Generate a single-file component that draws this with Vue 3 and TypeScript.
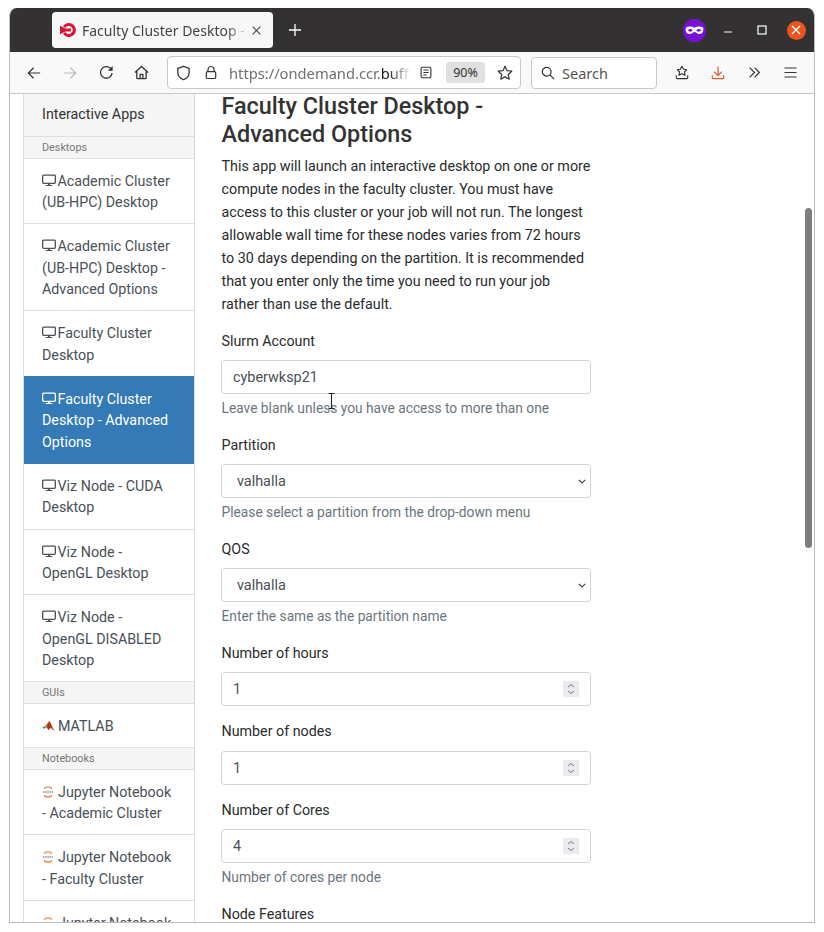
<script setup lang="ts">
interface NavItem { kind: 'head' | 'item' | 'top'; text: string; icon?: 'desktop' | 'matlab' | 'jupyter'; active?: boolean }
const nav: NavItem[] = [
  { kind: 'top', text: 'Interactive Apps' },
  { kind: 'head', text: 'Desktops' },
  { kind: 'item', icon: 'desktop', text: 'Academic Cluster (UB-HPC) Desktop' },
  { kind: 'item', icon: 'desktop', text: 'Academic Cluster (UB-HPC) Desktop - Advanced Options' },
  { kind: 'item', icon: 'desktop', text: 'Faculty Cluster Desktop' },
  { kind: 'item', icon: 'desktop', text: 'Faculty Cluster Desktop - Advanced Options', active: true },
  { kind: 'item', icon: 'desktop', text: 'Viz Node - CUDA Desktop' },
  { kind: 'item', icon: 'desktop', text: 'Viz Node - OpenGL Desktop' },
  { kind: 'item', icon: 'desktop', text: 'Viz Node - OpenGL DISABLED Desktop' },
  { kind: 'head', text: 'GUIs' },
  { kind: 'item', icon: 'matlab', text: 'MATLAB' },
  { kind: 'head', text: 'Notebooks' },
  { kind: 'item', icon: 'jupyter', text: 'Jupyter Notebook - Academic Cluster' },
  { kind: 'item', icon: 'jupyter', text: 'Jupyter Notebook - Faculty Cluster' },
  { kind: 'item', icon: 'jupyter', text: 'Jupyter Notebook - Viz Node' }
]
interface Field { label: string; type: 'text' | 'select' | 'number'; value: string; help?: string }
const fields: Field[] = [
  { label: 'Slurm Account', type: 'text', value: 'cyberwksp21', help: 'Leave blank unless you have access to more than one' },
  { label: 'Partition', type: 'select', value: 'valhalla', help: 'Please select a partition from the drop-down menu' },
  { label: 'QOS', type: 'select', value: 'valhalla', help: 'Enter the same as the partition name' },
  { label: 'Number of hours', type: 'number', value: '1' },
  { label: 'Number of nodes', type: 'number', value: '1' },
  { label: 'Number of Cores', type: 'number', value: '4', help: 'Number of cores per node' },
  { label: 'Node Features', type: 'text', value: '' }
]
</script>

<template>
  <div class="window">
    <header class="titlebar">
      <div class="tab">
        <svg class="favicon" width="16" height="16" viewBox="0 0 16 16"><path d="M3 4.300A7 7 0 1 1 3 11.700L5.200 9.900A4 4 0 1 0 5.200 6.100z" fill="#d3183a"/><path d="M0 3.800 5.500 6.500H11V9.500H5.500L0 12.200z" fill="#d3183a"/></svg>
        <span class="tab-title">Faculty Cluster Desktop -</span>
        <svg class="tab-close" width="9" height="9" viewBox="0 0 9 9"><path d="M.7.700l7.600 7.600M8.300.7L.7 8.300" stroke="#444" stroke-width="1.100"/></svg>
      </div>
      <svg class="newtab" width="12" height="12" viewBox="0 0 12 12"><path d="M6 0v12M0 6h12" stroke="#fff" stroke-width="1.300"/></svg>
      <div class="spacer"></div>
      <svg class="mask" width="23" height="23" viewBox="0 0 23 23"><circle cx="11.500" cy="11.500" r="11.500" fill="#7a10d6"/><path d="M3 8.500c2.500-1.300 6-1.200 8.500.2 2.500-1.400 6-1.500 8.500-.2 1 2.800-.2 6.500-3.500 6.500-2.500 0-3.500-2-5-2s-2.500 2-5 2C3.200 15 2 11.300 3 8.500z" fill="#fff"/><ellipse cx="7.300" cy="11.300" rx="2" ry="1.400" fill="#7a10d6"/><ellipse cx="15.700" cy="11.300" rx="2" ry="1.400" fill="#7a10d6"/></svg>
      <svg class="wb min" width="10" height="10" viewBox="0 0 10 10"><path d="M1 7h8" stroke="#fff" stroke-width="1.200"/></svg>
      <svg class="wb max" width="10" height="10" viewBox="0 0 10 10"><rect x="1" y="1" width="8" height="8" fill="none" stroke="#fff" stroke-width="1.200"/></svg>
      <div class="close-btn"><svg width="10" height="10" viewBox="0 0 10 10"><path d="M1 1l8 8M9 1l-8 8" stroke="#fff" stroke-width="1.400"/></svg></div>
    </header>

    <div class="toolbar">
      <button class="tb"><svg width="14" height="14" viewBox="0 0 16 16"><path d="M15 8H1.500M7.500 2l-6 6 6 6" fill="none" stroke="#333" stroke-width="1.400"/></svg></button>
      <button class="tb"><svg width="14" height="14" viewBox="0 0 16 16"><path d="M1 8h13.500M8.500 2l6 6-6 6" fill="none" stroke="#bbb" stroke-width="1.400"/></svg></button>
      <button class="tb"><svg width="15" height="15" viewBox="0 0 16 16"><path d="M14 8.500A6.200 6.200 0 1 1 12 3.300L14 5.500" fill="none" stroke="#333" stroke-width="1.400"/><path d="M14.500 1v5h-5z" fill="#333"/></svg></button>
      <button class="tb home"><svg width="15" height="15" viewBox="0 0 16 16"><path d="M1 8l7-6.500L15 8M3 6.500v7A1 1 0 0 0 4 14.500h8a1 1 0 0 0 1-1v-7M6.500 14.500v-4.500h3v4.500" fill="none" stroke="#333" stroke-width="1.400" stroke-linejoin="round"/></svg></button>
      <div class="urlbar">
        <svg class="shield" width="15" height="16" viewBox="0 0 16 16"><path d="M8 1l6 2v5c0 3.500-2.800 6-6 7-3.200-1-6-3.500-6-7V3z" fill="none" stroke="#333" stroke-width="1.400" stroke-linejoin="round"/></svg>
        <svg class="lock" width="12" height="15" viewBox="0 0 14 16"><path d="M3.500 7V4.500a3.500 3.500 0 0 1 7 0V7" fill="none" stroke="#333" stroke-width="1.400"/><rect x="1.500" y="7" width="11" height="8" rx="1.500" fill="none" stroke="#333" stroke-width="1.400"/></svg>
        <div class="url"><span class="url-dim">https://ondemand.ccr.</span><span class="url-dark">buff</span></div>
        <svg class="reader" width="12" height="13" viewBox="0 0 14 16"><rect x="1" y="1.500" width="12" height="13" rx="2" fill="none" stroke="#333" stroke-width="1.400"/><path d="M3.800 5h6.400M3.800 8h6.400M3.800 11h4" stroke="#333" stroke-width="1.300"/></svg>
        <span class="zoom">90%</span>
        <svg class="star" width="16" height="16" viewBox="0 0 17 17"><path d="M8.500 1.300l2.200 4.700 5 .6-3.700 3.500 1 5-4.500-2.500L4 15.100l1-5L1.300 6.600l5-.6z" fill="none" stroke="#333" stroke-width="1.300" stroke-linejoin="round"/></svg>
      </div>
      <div class="searchbar">
        <svg width="14" height="14" viewBox="0 0 16 16"><circle cx="6.500" cy="6.500" r="5" fill="none" stroke="#333" stroke-width="1.400"/><path d="M10.200 10.200L15 15" stroke="#333" stroke-width="1.400"/></svg>
        <span>Search</span>
      </div>
      <div class="tools">
        <button class="tb"><svg width="14" height="15" viewBox="0 0 16 16"><path d="M8 .8l1.800 3.500 3.700.5-2.700 2.600.7 3.700L8 9.300 4.500 11.100l.7-3.700L2.500 4.800l3.700-.5z" fill="none" stroke="#333" stroke-width="1.300" stroke-linejoin="round"/><path d="M1.500 11v3a1 1 0 0 0 1 1h11a1 1 0 0 0 1-1v-3" fill="none" stroke="#333" stroke-width="1.300"/></svg></button>
        <button class="tb"><svg width="14" height="15" viewBox="0 0 16 16"><path d="M8 1v10M3.500 7L8 11.500 12.500 7M1.500 11v3a1 1 0 0 0 1 1h11a1 1 0 0 0 1-1v-3" fill="none" stroke="#e8562a" stroke-width="1.400"/></svg></button>
        <button class="tb"><svg width="13" height="13" viewBox="0 0 16 16"><path d="M2 2l6 6-6 6M8 2l6 6-6 6" fill="none" stroke="#333" stroke-width="1.500"/></svg></button>
        <button class="tb"><svg width="13" height="13" viewBox="0 0 13 13"><path d="M.5 2h12M.5 6.500h12M.5 11h12" stroke="#333" stroke-width="1.200"/></svg></button>
      </div>
    </div>

    <main class="viewport">
      <aside class="sidebar">
        <template v-for="n in nav" :key="n.text">
          <div v-if="n.kind === 'top'" class="nav-top">{{ n.text }}</div>
          <div v-else-if="n.kind === 'head'" class="nav-head">{{ n.text }}</div>
          <a v-else class="nav-item" :class="{ active: n.active }">
            <svg v-if="n.icon === 'desktop'" class="ic-desktop" width="14" height="13" viewBox="0 0 15 13"><rect x=".7" y=".7" width="13.600" height="8.800" rx="1" fill="none" stroke="currentColor" stroke-width="1.400"/><path d="M6.500 9.500v1.800h2V9.500zM4 11.300h7v1.200H4z" fill="currentColor"/></svg>
            <svg v-else-if="n.icon === 'matlab'" class="ic-matlab" width="13" height="12" viewBox="0 0 14 12"><path d="M0 7.500l3.500-1.600L5 7.500 2.500 9z" fill="#3f9a9a"/><path d="M3.500 5.900L8 .5l2 5-2.500 3z" fill="#d8541c"/><path d="M8 .5c1.500 2.500 3 7 5.500 10.500-1.800-1-3.700-2.700-4.500-2.900-.7.800-1.300 1.600-2 2.400-.500-1-1-2-2-3z" fill="#b8370f"/></svg>
            <svg v-else class="ic-jupyter" width="12" height="14" viewBox="0 0 12 14"><path d="M2 3.500c2-2.200 6-2.200 8 0M2 10.500c2 2.200 6 2.200 8 0" fill="none" stroke="#e8823c" stroke-width="1.300"/><path d="M1 7h10" stroke="#aaa" stroke-width="2" stroke-dasharray="1.500 .7"/></svg>
            {{ n.text }}
          </a>
        </template>
      </aside>

      <section class="content">
        <h1>Faculty Cluster Desktop -<br />Advanced Options</h1>
        <p>This app will launch an interactive desktop on one or more compute nodes in the faculty cluster. You must have access to this cluster or your job will not run. The longest allowable wall time for these nodes varies from 72 hours to 30 days depending on the partition. It is recommended that you enter only the time you need to run your job<br />rather than use the default.</p>
        <form class="form" @submit.prevent>
          <div v-for="f in fields" :key="f.label" class="group">
            <label>{{ f.label }}</label>
            <div class="control">
              <select v-if="f.type === 'select'" class="input sel"><option>{{ f.value }}</option></select>
              <input v-else class="input" :class="{ num: f.type === 'number' }" :value="f.value" readonly />
              <svg v-if="f.type === 'select'" class="chev" width="8" height="5" viewBox="0 0 8 5"><path d="M.8.800L4 4l3.200-3.200" fill="none" stroke="#444" stroke-width="1.200"/></svg>
              <span v-if="f.type === 'number'" class="spin"><svg width="8" height="12" viewBox="0 0 8 12"><path d="M1 4l3-2.500L7 4M1 8l3 2.500L7 8" fill="none" stroke="#777" stroke-width="1"/></svg></span>
            </div>
            <small v-if="f.help">{{ f.help }}</small>
          </div>
        </form>
      </section>

      <div class="scrollbar"></div>
      <svg class="ibeam" width="7" height="16" viewBox="0 0 7 16"><path d="M.5.500h6M.5 15.500h6M3.500.5v15" stroke="#222" stroke-width="1.100" fill="none"/></svg>
    </main>
  </div>
</template>

<style>
html, body { margin: 0; background: #fff; }
</style>

<style scoped>
.window { box-sizing: border-box; width: 806px; height: 915px; margin: 8px 0 0 9px; border: 1px solid #bdbdbd; border-top: 0; border-radius: 8px 8px 0 0; overflow: hidden; display: flex; flex-direction: column; font-family: "Noto Sans", sans-serif; }
.titlebar { flex: none; height: 44px; background: #333132; display: flex; align-items: center; padding-left: 42px; }
.tab { width: 221px; height: 36px; box-sizing: border-box; background: #f7f7f7; border-radius: 4px; display: flex; align-items: center; padding-left: 8px; }
.favicon { flex: none; }
.tab-title { margin-left: 6px; font-size: 14px; color: #444; white-space: nowrap; width: 166px; overflow: hidden; -webkit-mask-image: linear-gradient(90deg, #000 145px, transparent 166px); mask-image: linear-gradient(90deg, #000 145px, transparent 166px); }
.tab-close { margin-left: 4px; flex: none; }
.newtab { margin-left: 16px; flex: none; }
.spacer { flex: 1; }
.mask { flex: none; margin-right: 17px; }
.wb { flex: none; }
.min { margin-right: 24px; }
.max { margin-right: 20px; }
.close-btn { width: 19px; height: 19px; border-radius: 50%; background: #e9541f; display: flex; align-items: center; justify-content: center; margin-right: 8.500px; }
.toolbar { flex: none; height: 42px; box-sizing: border-box; background: #f9f9fa; border-bottom: 1px solid #c8c8c8; display: flex; align-items: center; padding-left: 6px; }
.tb { width: 36px; height: 32px; flex: none; padding: 0; border: 0; background: none; display: flex; align-items: center; justify-content: center; }
.tb.home { padding-right: 1px; }
.urlbar { flex: none; box-sizing: border-box; margin-left: 7px; width: 354px; height: 33px; background: #fff; border: 1px solid #c9c9c9; border-radius: 4px; display: flex; align-items: center; padding-left: 8px; }
.shield { flex: none; }
.lock { flex: none; margin-left: 14px; }
.url { margin-left: 12px; width: 182px; overflow: hidden; white-space: nowrap; font-size: 14.700px; -webkit-mask-image: linear-gradient(90deg, #000 160px, transparent 182px); mask-image: linear-gradient(90deg, #000 160px, transparent 182px); }
.url-dim { color: #6f6f6f; }
.url-dark { color: #222; }
.reader { flex: none; margin-left: 9px; }
.zoom { flex: none; box-sizing: border-box; margin-left: 14px; width: 39px; height: 21px; background: #e0e0e0; border-radius: 3px; font-size: 12.500px; line-height: 21px; text-align: center; color: #333; }
.star { flex: none; margin-left: 12px; }
.searchbar { flex: none; box-sizing: border-box; margin-left: 10px; width: 126px; height: 32px; background: #fff; border: 1px solid #c9c9c9; border-radius: 4px; display: flex; align-items: center; padding-left: 9px; gap: 7px; font-size: 14.500px; color: #555; }
.tools { display: flex; margin-left: 7px; }
.viewport { flex: 1; min-height: 0; position: relative; overflow: hidden; background: #fff; display: flex; align-items: flex-start; font-family: Roboto, sans-serif; font-size: 14.280px; line-height: 23.040px; color: #292b2c; }
.sidebar { flex: none; box-sizing: border-box; width: 172px; margin-left: 13px; border: 1px solid #ddd; border-top: 0; border-bottom: 0; }
.nav-top { height: 43px; box-sizing: border-box; padding: 9px 18px; background: #f5f5f5; border-bottom: 1px solid #ddd; color: #333; line-height: 23px; }
.nav-head { height: 21.600px; box-sizing: border-box; padding: 0 18px; background: #f5f5f5; border-bottom: 1px solid #ddd; font-size: 10.800px; line-height: 21px; color: #777; }
.nav-item { display: block; box-sizing: border-box; padding: 12px 18px 9.600px; line-height: 21.500px; color: #495057; background: #fff; border-bottom: 1px solid #ddd; }
.nav-item.active { background: #337ab7; color: #fff; border-bottom-color: #337ab7; margin-top: -1px; padding-top: 13px; }
.ic-desktop { vertical-align: -1px; margin-right: -2px; }
.ic-matlab { vertical-align: -1px; margin-right: -.5px; }
.ic-jupyter { vertical-align: -2px; margin-left: 0; margin-right: .5px; }
.content { flex: none; box-sizing: border-box; width: 370px; margin-left: 26.500px; margin-top: -2px; }
h1 { margin: 0 0 7px; font-size: 23.400px; font-weight: 500; line-height: 28px; color: #333; }
p { margin: 0 0 13.400px; font-size: 14.320px; }
.group { margin-bottom: 14.400px; }
label { display: block; margin-bottom: 7.200px; line-height: 23px; }
.control { position: relative; height: 34.200px; margin: 0 .5px 0 -.5px; }
.input { box-sizing: border-box; display: block; width: 100%; height: 100%; margin: 0; padding: 0 11px; border: 1px solid #ced4da; border-radius: 3.600px; background: #fff; color: #495057; font: 14.400px Roboto, sans-serif; outline: 0; }
.sel { appearance: none; -webkit-appearance: none; padding: 1px 0 0 15px; }
.num { padding-top: 1px; }
.chev { position: absolute; right: 5px; top: 15px; }
.spin { position: absolute; right: 12px; top: 9px; width: 16px; height: 16px; background: #ebebef; display: flex; align-items: center; justify-content: center; }
small { display: block; margin-top: 3.600px; font-size: 13.760px; line-height: 21.600px; color: #6c757d; }
.scrollbar { position: absolute; right: 2px; top: 114px; width: 7px; height: 340px; border-radius: 4px; background: #7f7f7f; }
.ibeam { position: absolute; left: 318px; top: 299px; }
</style>
